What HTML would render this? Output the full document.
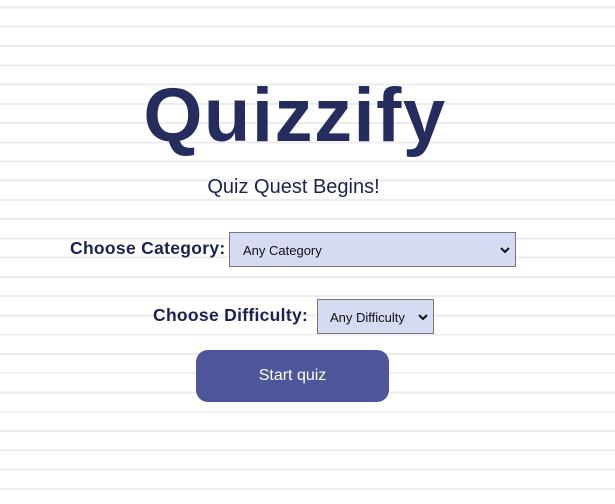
<!DOCTYPE html>
<html><head><style>
html,body{margin:0;padding:0;}
body{width:615px;height:504px;overflow:hidden;position:relative;background:#fff;
background-image:repeating-linear-gradient(to bottom,transparent 0,transparent 6.5px,#ececec 6.5px,#ececec 8.5px,transparent 8.5px,transparent 19.25px);
font-family:"Liberation Sans",sans-serif;}
.t{position:absolute;left:0;width:590px;text-align:center;top:71px;font-size:76px;font-weight:bold;color:#252d5f;letter-spacing:1.5px;line-height:90px}
.s{position:absolute;left:0;width:587px;text-align:center;top:175px;font-size:20px;color:#1c2250;line-height:24px}
.l{position:absolute;font-size:17.5px;font-weight:bold;color:#1c2250;letter-spacing:0.3px;line-height:22px}
.sel{position:absolute;background:#d6daf3;border:1px solid #767676;box-sizing:border-box;font-size:13px;color:#111;line-height:13px}
.sel svg{position:absolute;top:50%;margin-top:-3px}
.b{position:absolute;left:196px;top:350px;width:193px;height:52px;background:#4c5699;border-radius:12px;color:#fff;font-size:16px;text-align:center;line-height:52px}
</style></head><body>
<div class="t">Quizzify</div>
<div class="s">Quiz Quest Begins!</div>
<div class="l" style="left:70px;top:237px">Choose Category:</div>
<div class="sel" style="left:229px;top:232px;width:287px;height:35px"><span style="position:absolute;left:13px;top:11px">Any Category</span><svg style="right:5px" width="10" height="6" viewBox="0 0 10 6"><path d="M1 1l4 4 4-4" fill="none" stroke="#111" stroke-width="2"/></svg></div>
<div class="l" style="left:153px;top:304px">Choose Difficulty:</div>
<div class="sel" style="left:317px;top:299px;width:117px;height:35px"><span style="position:absolute;left:12px;top:11px">Any Difficulty</span><svg style="right:5px" width="10" height="6" viewBox="0 0 10 6"><path d="M1 1l4 4 4-4" fill="none" stroke="#111" stroke-width="2"/></svg></div>
<div class="b">Start quiz</div>
</body></html>
